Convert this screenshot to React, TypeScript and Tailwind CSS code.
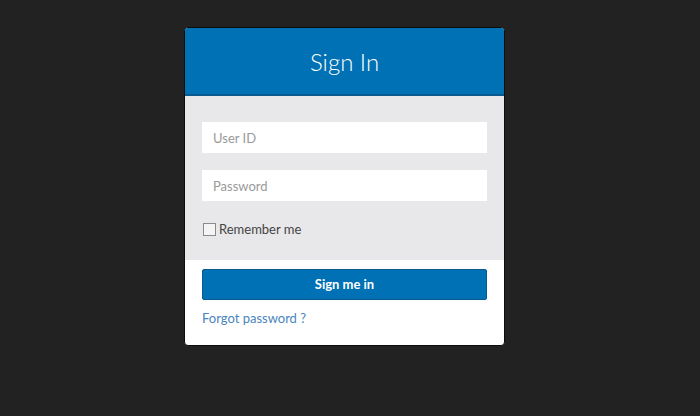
export default function App() {
  return (
    <div
      className="w-[700px] h-[416px] bg-[#222222] flex justify-center items-start pt-[27px]"
      style={{ fontFamily: "Lato, 'Liberation Sans', sans-serif" }}
    >
      <div className="w-[321px] mr-[11px] rounded-[4px] border border-[#0d0d0d] overflow-hidden bg-white">
        <div className="h-[68px] bg-[#0071b5] border-b-[2px] border-[#0a5a8f] flex items-center justify-center">
          <h1 className="text-[24px] font-light text-white mt-[1px]">Sign In</h1>
        </div>
        <form className="flex flex-col" onSubmit={(e) => e.preventDefault()}>
          <div className="bg-[#e8e8ea] px-[17px] pt-[26px] pb-[24px] flex flex-col">
            <input
              type="text"
              placeholder="User ID"
              className="h-[31px] bg-white px-[11px] text-[13px] text-[#444] placeholder:text-[#9a9a9a] outline-none"
            />
            <input
              type="password"
              placeholder="Password"
              className="h-[31px] bg-white px-[11px] mt-[17px] text-[13px] text-[#444] placeholder:text-[#9a9a9a] outline-none"
            />
            <label className="flex items-center mt-[22px] text-[13px] text-[#444] leading-none">
              <span className="w-[13px] h-[13px] border border-[#8a8a8a] bg-[#f4f4f4] mr-[3px] ml-[1px]" />
              Remember me
            </label>
          </div>
          <div className="px-[17px] pt-[9px] pb-[17px] flex flex-col">
            <button
              type="submit"
              className="h-[31px] rounded-[2px] bg-[#0071b5] border border-[#0a5a8f] text-white text-[13px] font-bold"
            >
              Sign me in
            </button>
            <a href="#" className="mt-[8px] text-[13px] text-[#4a85bd] leading-[20px]">
              Forgot password ?
            </a>
          </div>
        </form>
      </div>
    </div>
  );
}
